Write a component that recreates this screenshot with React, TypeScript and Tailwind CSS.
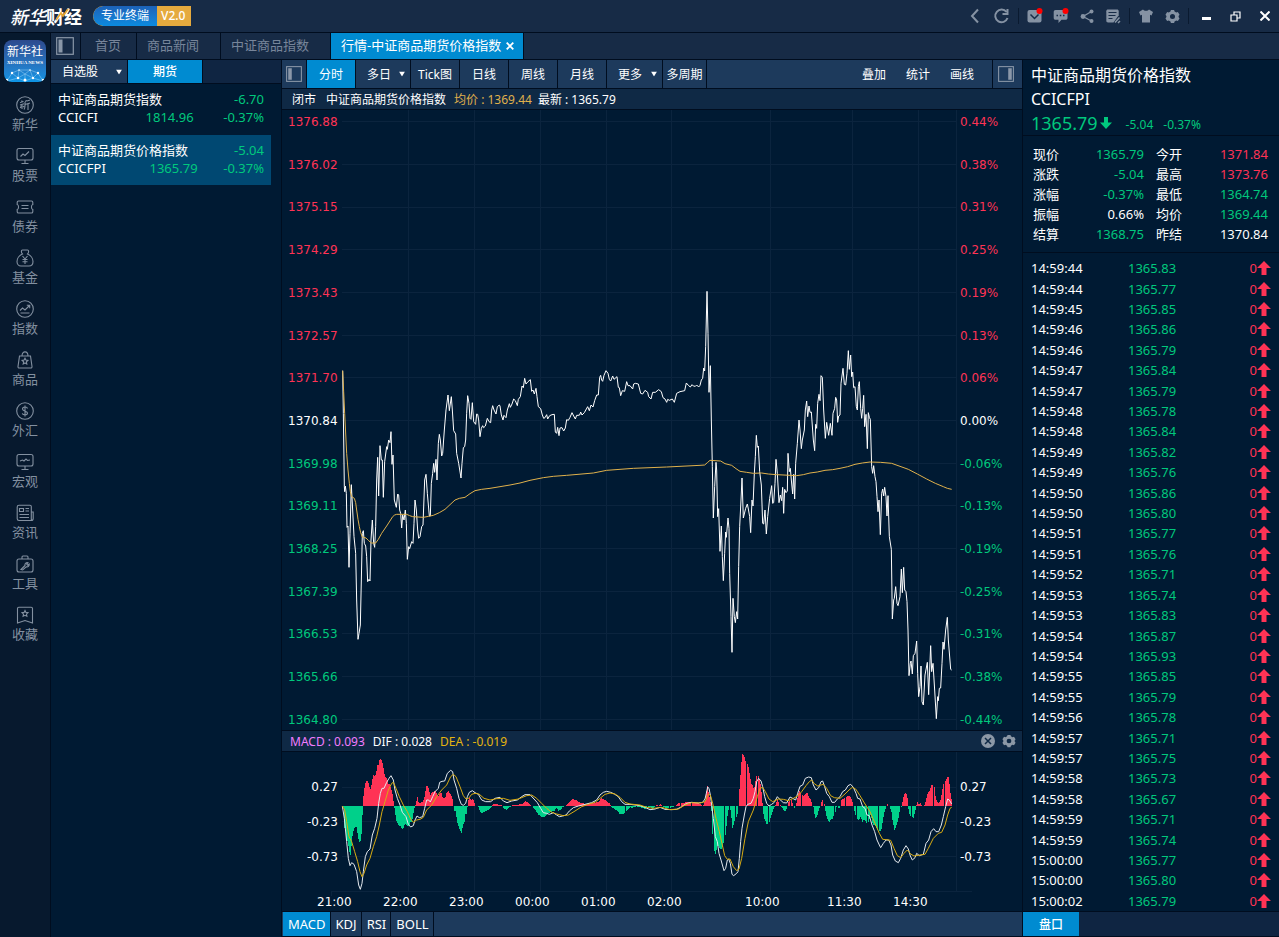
import { useState } from 'react'
import type { ReactNode } from 'react'

const navItems = ['新华', '股票', '债券', '基金', '指数', '商品', '外汇', '宏观', '资讯', '工具', '收藏']

const watchList = [
  { name: '中证商品期货指数', code: 'CCICFI', price: '1814.96', change: '-6.70', pct: '-0.37%' },
  { name: '中证商品期货价格指数', code: 'CCICFPI', price: '1365.79', change: '-5.04', pct: '-0.37%' },
]

const priceLabels = ['1376.88', '1376.02', '1375.15', '1374.29', '1373.43', '1372.57', '1371.70', '1370.84', '1369.98', '1369.11', '1368.25', '1367.39', '1366.53', '1365.66', '1364.80']
const pctLabels = ['0.44%', '0.38%', '0.31%', '0.25%', '0.19%', '0.13%', '0.06%', '0.00%', '-0.06%', '-0.13%', '-0.19%', '-0.25%', '-0.31%', '-0.38%', '-0.44%']
const macdLabels = ['0.27', '-0.23', '-0.73']
const timeLabels = ['21:00', '22:00', '23:00', '00:00', '01:00', '02:00', '10:00', '11:30', '14:30']

const quoteRows = [
  ['现价', '1365.79', 'down', '今开', '1371.84', 'up'],
  ['涨跌', '-5.04', 'down', '最高', '1373.76', 'up'],
  ['涨幅', '-0.37%', 'down', '最低', '1364.74', 'down'],
  ['振幅', '0.66%', 'flat', '均价', '1369.44', 'down'],
  ['结算', '1368.75', 'down', '昨结', '1370.84', 'flat'],
]

const trades = [
  ['14:59:44', '1365.83'], ['14:59:44', '1365.77'], ['14:59:45', '1365.85'], ['14:59:46', '1365.86'],
  ['14:59:46', '1365.79'], ['14:59:47', '1365.84'], ['14:59:47', '1365.79'], ['14:59:48', '1365.78'],
  ['14:59:48', '1365.84'], ['14:59:49', '1365.82'], ['14:59:49', '1365.76'], ['14:59:50', '1365.86'],
  ['14:59:50', '1365.80'], ['14:59:51', '1365.77'], ['14:59:51', '1365.76'], ['14:59:52', '1365.71'],
  ['14:59:53', '1365.74'], ['14:59:53', '1365.83'], ['14:59:54', '1365.87'], ['14:59:54', '1365.93'],
  ['14:59:55', '1365.85'], ['14:59:55', '1365.79'], ['14:59:56', '1365.78'], ['14:59:57', '1365.71'],
  ['14:59:57', '1365.75'], ['14:59:58', '1365.73'], ['14:59:58', '1365.67'], ['14:59:59', '1365.71'],
  ['14:59:59', '1365.74'], ['15:00:00', '1365.77'], ['15:00:00', '1365.80'], ['15:00:02', '1365.79'],
]

const tone: Record<string, string> = {
  up: 'text-[#ff3355]',
  down: 'text-[#00c87d]',
  flat: 'text-white',
}

// each session is plotted from its own x origin
const priceNight1 = '38,272 40,400 43,620 44,635 46,618 49,640 51,742 54,738 57,862 60,760 64,614 68,690 72,770 77,820 80,960 84,1078 87,1060 91,1035 94,900 97,760 100,752 103,790 107,798 110,830 113,905 117,898 120,903 123,780 127,720 131,790 134,802 137,740 140,600 143,532 146,648 150,497 154,540 157,540 160,652 164,545 170,500 172,508 176,480 180,488 183,455 186,553 189,525 193,660 199,682 203,642 206,645 209,690 212,700 215,744 218,705 222,720 226,690 229,730 232,838 236,800 239,806 245,785 249,790 252,730 255,660 259,690 263,750 266,775 270,770 275,740 279,735 284,600 288,583 292,640 298,708 301,708 304,610 308,580 311,550 314,577 318,538 321,600 325,490 328,463 331,480 335,528 338,520 343,450 348,390 354,345 358,392 364,350 367,390 371,452 377,462 380,520 386,550 393,594 396,550 400,503 404,500 407,480 410,400 413,347 417,370 420,415 423,418 427,368 431,425 437,433 440,402 443,403 446,420 450,470 454,445 458,437 461,443 466,438 472,415 477,425 482,428 485,390 488,377 492,390 498,402 502,380 508,375 510,378'
const priceNight2 = '0,378 4,405 9,420 12,406 15,410 18,413 22,390 28,371 31,382 36,372 41,357 46,362 52,377 55,358 61,350 66,318 70,323 74,295 78,312 84,305 91,299 95,334 99,330 103,342 108,325 111,350 115,380 122,386 127,405 131,415 135,413 140,404 143,417 149,407 156,404 163,403 166,456 170,460 173,442 177,467 180,444 186,443 191,453 196,444 200,419 205,421 210,412 216,398 221,408 226,417 230,406 234,406 239,405 242,396 246,405 253,398 263,380 268,392 273,375 279,381 284,362 290,345 295,345 299,292 302,286 305,300 308,304 312,286 318,272 324,280 328,298 332,303 338,288 342,298 351,290 355,322 358,323 362,347 367,332 374,334 380,305 384,317 390,317 398,327 401,312 406,310 415,312 422,340 428,342 435,331 443,337 446,350 453,357 458,337 466,337 476,329 484,335 489,353 495,357 500,367 503,358 508,361 517,357 523,367 530,340 540,335 554,332 559,309 566,317 571,321 576,314 580,318 586,319 590,315 596,321 600,316'
const priceDay = '0,316 4,300 8,295 11,264 14,273 17,200 21,34 24,160 27,337 31,257 34,420 37,560 40,714 44,620 48,547 50,570 53,710 56,686 60,814 64,738 67,830 70,902 74,820 77,756 79,772 84,714 87,745 89,880 93,1010 96,1117 99,955 103,1010 106,1028 110,995 113,1017 116,860 119,740 123,660 126,594 130,714 137,685 142,672 145,687 149,710 152,758 156,660 159,678 163,580 166,530 169,466 172,502 175,498 179,575 184,615 188,730 191,732 195,690 199,762 203,710 209,655 215,617 218,670 221,668 225,610 228,538 232,580 237,668 241,645 245,662 248,622 251,700 254,628 258,638 262,633 264,520 268,575 271,565 274,600 278,642 281,583 284,657 287,550 292,490 297,420 300,450 304,506 307,480 313,450 316,390 320,363 323,410 327,378 330,397 334,396 340,480 344,512 347,433 350,445 353,370 357,343 360,362 363,287 367,292 371,390 376,475 380,427 386,466 391,430 396,466 399,400 404,385 407,352 410,360 413,427 416,408 420,405 423,310 429,265 433,313 437,315 441,280 445,212 448,268 452,225 455,290 458,276 461,323 465,320 469,380 472,390 475,320 478,305 482,385 485,415 488,385 491,346 494,440 498,403 502,506 505,398 508,412 511,418 515,560 518,580 521,557 525,590 528,605 531,650 534,695 537,660 541,764 545,640 548,627 551,648 554,622 558,650 561,708 564,647 568,770 574,808 577,1017 581,960 583,955 587,920 591,970 594,977 600,950 604,867 607,938 611,862 614,930 618,935 621,965 624,1050 627,1187 631,1150 633,1143 637,1182 640,1127 645,1120 650,1083 653,1180 656,1250 660,1220 663,1158 666,1265 670,1275 675,1185 682,1147 686,1244 692,1097 695,1175 699,1150 704,1230 709,1316 713,1250 715,1262 718,1225 722,1224 726,1150 729,1086 732,1108 737,1050 742,1012 745,1080 752,1168 755,1170'
const avgNight = '38,272 41,335 44,400 50,520 54,570 58,610 61,635 65,650 73,655 77,668 80,690 84,718 88,740 92,758 97,771 108,774 116,782 124,789 137,789 145,778 155,760 172,735 188,710 194,705 200,703 230,703 239,707 248,710 280,712 296,709 310,706 328,698 345,688 360,674 375,660 388,655 405,652 420,641 435,632 455,628 480,625 540,615 570,609 600,601 640,593 670,589 710,586 790,579 830,571 910,565 1010,561 1110,556 1124,555'
const avgDay = '14,555 22,548 30,541 62,543 75,551 95,556 108,566 120,574 140,577 160,580 185,579 205,582 230,584 290,587 310,584 330,579 352,576 375,571 398,569 420,565 443,560 465,553 487,549 510,546 542,547 575,550 600,559 625,568 652,582 680,597 706,610 730,620 742,625 755,628'

const difNight = '187,243 193,280 200,350 205,400 210,422 215,413 222,418 230,440 236,480 241,493 246,475 250,440 256,395 262,380 270,372 277,330 284,310 291,280 296,235 301,205 306,190 312,190 320,172 327,160 333,152 340,165 345,195 352,220 360,240 367,262 378,275 385,298 392,306 400,302 405,285 411,273 418,278 428,275 434,250 440,225 446,225 451,231 458,215 465,200 475,190 479,172 486,169 494,168 502,145 512,136 518,140 522,165 530,190 537,220 544,238 550,241 557,235 562,215 568,202 577,197 585,203 595,208 605,225 617,230 632,230 645,220 660,217 670,228 681,233 695,228 712,225 725,215 735,209 750,209 762,222 772,233 782,250 790,263 800,265 808,268 820,263 830,270 838,275 848,273 858,270 868,258 880,248 895,243 915,238 935,233 950,225 960,210 970,202 980,199 992,202 1003,207 1015,215 1025,230 1035,238 1050,238'
const difDay = '30,238 45,240 60,242 75,247 90,254 105,252 120,247 135,253 155,254 170,253 185,245 200,235 215,232 235,234 248,232 255,222 259,205 263,186 267,190 271,210 275,240 280,280 286,335 292,350 297,385 303,405 312,437 317,430 322,405 326,402 331,415 336,448 341,452 350,445 354,440 358,400 362,350 366,310 373,270 378,245 383,238 393,235 400,220 405,200 410,170 416,160 423,168 428,185 434,215 440,235 447,243 455,238 463,232 472,215 478,222 490,233 500,234 510,216 518,220 527,225 533,205 540,184 548,180 556,160 566,156 574,158 580,180 588,195 596,188 603,170 608,168 614,185 620,205 628,215 636,232 644,232 652,222 660,215 668,200 676,195 684,182 692,178 700,187 708,205 713,220 720,222 728,245 735,250 741,270 748,272 756,300 764,320 771,345 778,360 782,368 790,355 798,345 806,345 813,360 818,390 826,408 835,413 842,400 850,375 858,362 865,372 871,393 877,405 885,398 890,385 898,392 910,388 918,355 926,345 933,320 941,311 948,320 956,320 964,300 970,275 977,245 983,222 988,225 995,237'
const deaNight = '187,243 194,255 200,290 207,335 215,350 224,380 233,410 240,440 246,455 252,445 260,420 270,400 280,365 290,335 298,300 306,260 315,230 325,195 335,175 340,172 348,190 358,215 370,240 382,260 392,282 400,292 410,285 420,283 430,277 440,255 455,240 470,215 485,195 500,180 512,155 520,148 528,155 540,185 550,212 558,222 566,220 575,208 585,205 597,207 612,220 630,225 650,221 670,220 690,226 715,222 740,212 755,210 770,220 785,235 800,250 815,262 830,267 850,272 865,270 885,258 905,245 925,238 945,232 960,220 975,208 990,204 1005,207 1020,217 1035,232 1050,237'
const deaDay = '30,237 60,240 80,247 100,250 125,247 150,254 175,252 195,240 215,233 240,234 255,230 265,208 271,210 278,235 288,280 298,320 307,360 314,392 322,403 330,402 340,425 350,437 357,432 365,400 375,340 385,290 400,255 412,215 420,190 428,187 436,200 447,222 458,230 475,222 490,223 505,227 520,220 533,213 545,200 558,182 568,170 575,165 583,176 593,183 610,178 620,190 632,212 643,218 660,220 675,207 687,195 697,187 707,192 720,212 735,237 750,260 765,295 778,325 788,343 800,344 812,346 822,370 832,392 842,398 852,385 862,375 872,387 882,393 900,390 915,388 925,370 940,340 955,325 965,322 975,300 983,270 990,250 995,247'

const histNight = '190,245 192,290 196,345 201,350 206,380 211,392 214,350 217,330 221,312 226,305 230,325 234,350 239,350 242,335 245,300 247,243 250,205 254,180 258,168 262,172 266,185 270,195 274,170 278,150 283,152 287,150 291,125 295,107 299,102 303,105 307,118 311,145 316,158 321,160 326,180 330,190 334,200 338,225 341,243 344,265 349,290 354,300 359,305 364,313 369,308 373,295 378,300 383,306 388,300 394,285 398,262 402,246 404,243 407,230 411,217 415,232 420,235 425,230 430,222 434,200 438,182 442,185 446,195 450,210 454,205 459,198 463,196 467,205 472,215 476,210 482,200 487,215 492,220 497,205 502,197 507,205 512,210 517,222 520,243 524,260 529,290 535,310 539,318 544,325 548,300 553,290 557,262 560,243 562,225 567,218 573,225 578,220 583,235 586,243 592,243 597,258 601,264 610,262 618,258 625,252 632,245 637,238 650,238 660,239 665,243 670,252 678,254 685,250 690,243 697,239 712,239 720,238 728,234 734,229 740,232 745,234 750,240 755,243 760,252 768,260 773,268 780,273 788,276 796,272 802,266 810,262 820,257 828,247 833,257 840,254 848,246 855,243 860,236 868,230 877,223 885,224 893,230 905,235 918,236 930,234 942,234 953,230 962,220 972,224 980,228 986,235 990,243 996,249 1006,254 1015,262 1020,268'
const histDay = '0,268 6,268 12,265 20,255 28,247 36,249 44,245 55,245 68,250 76,252 88,246 96,252 105,243 112,239 120,238 126,243 135,248 150,248 160,245 168,240 176,234 190,233 205,230 220,232 240,236 247,243 250,232 254,228 257,200 260,181 264,200 268,220 272,235 274,260 277,325 280,375 284,387 288,370 292,360 297,370 302,375 307,365 311,350 315,320 319,280 323,255 327,243 330,255 333,275 337,312 341,295 345,280 350,265 353,245 355,207 359,160 362,122 365,88 369,88 374,100 379,115 383,127 387,150 392,175 397,180 401,195 404,178 408,155 413,152 417,165 421,190 425,225 428,260 431,280 436,290 441,300 446,290 450,275 456,258 462,247 466,238 472,225 476,232 480,243 485,250 491,260 497,255 501,246 505,232 511,225 517,240 522,250 527,238 532,215 537,195 543,208 549,214 555,205 560,202 566,218 572,222 577,243 580,265 584,280 590,272 596,250 602,240 606,222 610,235 614,260 619,280 626,292 632,283 638,282 643,262 648,240 655,250 660,243 664,220 670,222 677,215 682,212 688,215 695,225 700,243 704,262 709,283 714,287 720,275 726,290 732,283 740,295 744,290 749,270 752,278 757,300 763,300 769,310 775,318 781,318 786,290 791,265 796,250 802,236 806,243 812,262 816,290 822,315 828,300 834,285 838,262 842,243 846,225 850,207 855,205 860,207 863,235 866,265 871,273 877,280 883,262 887,243 890,227 895,240 901,233 905,243 910,243 915,228 919,212 924,200 929,198 932,180 936,180 940,182 943,210 948,230 954,235 959,230 964,207 968,185 973,168 978,160 982,150 986,170 990,205 994,225 995,243'

const ZERO = 243

// one bar per minute, heights read off the outline
function histogram(outline: string) {
  const pts = outline.split(' ').map((p) => p.split(',').map(Number))
  const bars: { x: number; v: number }[] = []
  let i = 0
  for (let x = pts[0][0]; x < pts[pts.length - 1][0]; x += 3.3) {
    while (pts[i + 1][0] < x) i++
    const [x0, y0] = pts[i]
    const [x1, y1] = pts[i + 1]
    bars.push({ x, v: y0 + ((y1 - y0) * (x - x0)) / (x1 - x0) })
  }
  return bars
}

function Bars({ outline }: { outline: string }) {
  return (
    <g shapeRendering="crispEdges">
      {histogram(outline).map((b) => (
        <rect key={b.x} x={b.x} y={Math.min(b.v, ZERO)} width={3.2} height={Math.abs(b.v - ZERO)} fill={b.v < ZERO ? '#ff3355' : '#00d08a'} />
      ))}
    </g>
  )
}

function Line({ points, color }: { points: string; color: string }) {
  return <polyline points={points} fill="none" stroke={color} strokeWidth={1} strokeLinejoin="round" vectorEffect="non-scaling-stroke" />
}

function GridLine({ d }: { d: string }) {
  return <path d={d} stroke="#0b243e" fill="none" vectorEffect="non-scaling-stroke" shapeRendering="crispEdges" />
}

const priceCols = [235, 433, 630, 828, 1025, 1321, 1567, 1765, 1880]

function PriceChart() {
  return (
    <svg viewBox="36 -510 1845 1860" preserveAspectRatio="none" className="block h-full w-full" role="img" aria-label="分时走势">
      {priceLabels.map((l, i) => <GridLine key={l} d={`M36 ${-475 + i * 128}H1881`} />)}
      {priceCols.map((x) => <GridLine key={x} d={`M${x} -510V1350`} />)}
      <Line points={priceNight1} color="#ffffff" />
      <g transform="translate(510 0)"><Line points={priceNight2} color="#ffffff" /></g>
      <g transform="translate(1110 0)"><Line points={priceDay} color="#ffffff" /></g>
      <Line points={avgNight} color="#e0b14c" />
      <g transform="translate(1110 0)"><Line points={avgDay} color="#e0b14c" /></g>
    </svg>
  )
}

function MacdChart() {
  return (
    <svg viewBox="186 81 1845 420" preserveAspectRatio="none" className="block h-full w-full overflow-visible" role="img" aria-label="MACD">
      {[186, 290, 394].map((y) => <GridLine key={y} d={`M186 ${y}H2031`} />)}
      {priceCols.map((x) => <GridLine key={x} d={`M${x + 150} 81V499`} />)}
      <GridLine d="M155 499H2077" />
      {[155, 355, 553, 751, 949, 1147, 1441, 1687, 1885].map((x) => <GridLine key={x} d={`M${x} 499V512`} />)}
      <Bars outline={histNight} />
      <g transform="translate(1020 0)"><Bars outline={histDay} /></g>
      <Line points={difNight} color="#e4e9ee" />
      <g transform="translate(1020 0)"><Line points={difDay} color="#e4e9ee" /></g>
      <Line points={deaNight} color="#d8ab12" />
      <g transform="translate(1020 0)"><Line points={deaDay} color="#d8ab12" /></g>
    </svg>
  )
}

const star = 'M9 7.2l.9 1.9 2 .3-1.5 1.4.4 2.1L9 11.9l-1.8 1 .4-2.1-1.5-1.4 2-.3z'

const navIcons: Record<string, ReactNode> = {
  新华: <><circle cx="9" cy="9" r="8.3" /><path d="M4 6.5l3.5-1M5.8 4.5v2M4 9l4-1.2M6 8v5M4.2 12l1-1.6M7 10l1 1.2M9 5.5l2-1M9 6v3.5c0 2-.4 3-1 4M9 8.5l5-1.5M12 7.5V14M11 5l3-1" /></>,
  股票: <><rect x="1" y="1.5" width="16" height="11.5" rx="2" /><path d="M9 13v3M5.5 16.5h7M4.500 9.500L7 7l2 1.500L13 4.500" /></>,
  债券: <path d="M2.500 3h13c.8 0 1.300.5 1.300 1.300v2.200c-1.800.3-1.800 4.700 0 5v2.200c0 .8-.5 1.300-1.300 1.300h-13c-.8 0-1.300-.5-1.300-1.300v-2.200c1.800-.3 1.800-4.700 0-5V4.300C1.200 3.500 1.700 3 2.500 3zM5.500 7.500h7M5.500 10.500h7" />,
  基金: <><path d="M6.500 5C5 3.500 5 1 6.500 1h5c1.500 0 1.500 2.500 0 4 3.500 1.500 5.500 5 5.500 7.500S15.500 17 13 17H5c-2.500 0-4-2-4-4.500S3 6.500 6.500 5z" /><path d="M6.500 7L9 10l2.500-3M9 10v5M6.500 10.500h5M6.500 12.700h5" /></>,
  指数: <><circle cx="9" cy="9" r="8.3" /><path d="M4 10.500l2.500-2.500 2.500 2 4.500-4.500M10.800 5.300h2.900v2.900M4.500 13h9" /></>,
  商品: <><path d="M3.500 5h11l1.500 10.500c.1.900-.4 1.500-1.300 1.500H3.300c-.9 0-1.400-.6-1.300-1.500zM6 5c0-5.500 6-5.500 6 0" /><path d={star} /></>,
  外汇: <><circle cx="9" cy="9" r="8.3" /><path d="M11.500 6.500C11 4.500 6.500 4.500 6.500 7S11.500 8.800 11.500 11 7 13.500 6.300 11.300M9 3.500v11" /></>,
  宏观: <><rect x="1" y="1.5" width="16" height="11.5" rx="2" /><path d="M9 13v3M5.500 16.500h7M4 8l2.500-1L8 8l2-2 1.500 1.500L14 7" /></>,
  资讯: <><path d="M3 1.200h11c.8 0 1.300.5 1.300 1.300v14H3c-1 0-1.800-.7-1.800-1.700V3c0-1 .8-1.800 1.800-1.800zM15.300 8h1.900v6.500c0 1.200-.7 2-1.900 2" /><path d="M3.500 4.500h4v3h-4zM9.500 4.500h3.500M9.500 7h3.500M3.500 10.500H13M3.500 13.500H13" /></>,
  工具: <><rect x="1" y="4" width="16" height="13" rx="2" /><path d="M6 4V2c0-.6.4-1 1-1h4c.6 0 1 .4 1 1v2" /><path d="M5 14.500l4-4c-.5-2 1.500-3.500 3-2.800L10.700 9l1 1.200 1.500-1.200c.3 2-1.200 3.300-3 2.800l-3.500 3.200z" /></>,
  收藏: <><path d="M1.500 17V2.500c0-.8.5-1.300 1.300-1.300h12.400c.8 0 1.300.5 1.300 1.300V17L9 14.500z" /><path d="M9 4.500l.9 1.900 2.100.3-1.500 1.500.4 2.100L9 9.300l-1.900 1 .4-2.100L6 6.700l2.100-.3z" /></>,
}

function GearIcon({ size }: { size: number }) {
  return (
    <svg width={size} height={size} viewBox="0 0 16 16" fill="currentColor" aria-hidden="true">
      <path fillRule="evenodd" d="M6.300 1h3.400l.5 1.700 1.800 1 1.700-.5L15.500 6l-1 1.500v1l1 1.500-1.800 2.800-1.700-.5-1.800 1L9.700 15H6.300l-.5-1.700-1.800-1-1.700.5L.5 10l1-1.500v-1L.5 6l1.800-2.800 1.700.5 1.800-1zM8 5.300a2.700 2.700 0 1 0 0 5.400 2.700 2.700 0 0 0 0-5.400z" />
    </svg>
  )
}

function PanelIcon({ side, size }: { side: 'left' | 'right'; size: number }) {
  return (
    <svg width={size} height={size} viewBox="0 0 18 18" aria-hidden="true">
      <rect x="0.7" y="0.7" width="16.6" height="16.6" fill="none" stroke="#8a97a8" strokeWidth="1.2" />
      <rect x={side === 'left' ? 2.5 : 11.5} y="2.5" width="4" height="13" fill="#8a97a8" />
    </svg>
  )
}

function IconButton({ label, dot, children }: { label: string; dot?: boolean; children: ReactNode }) {
  return (
    <button type="button" aria-label={label} className="flex h-8 w-[26px] items-center justify-center text-[#8592a3]">
      <svg width="16" height="16" viewBox="0 0 16 16" fill="none" stroke="currentColor" aria-hidden="true" className="overflow-visible">
        {children}
        {dot && <circle cx="12.5" cy="3" r="3" fill="#ff0000" stroke="none" />}
      </svg>
    </button>
  )
}

function Divider() {
  return <span className="mx-[3px] h-4 w-px bg-[#0a1a30]" />
}

function TitleBar() {
  return (
    <header className="flex h-[33px] shrink-0 items-center border-b border-[#000d1f] bg-[#172b46]">
      <h1 className="relative flex items-center pl-2.5 text-lg leading-8 text-white">
        <span className="font-['Noto_Sans_CJK_SC',sans-serif] font-medium italic">新华</span>
        <span className="font-['Noto_Sans_CJK_SC',sans-serif] font-bold">财经</span>
        <svg className="absolute top-2 right-3" width="14" height="14" viewBox="0 0 14 14" fill="none" stroke="#e8a62d" strokeWidth="1.6" aria-hidden="true">
          <path d="M0 12L5 5l2 3 5-7" />
        </svg>
      </h1>
      <div className="ml-[11px] flex h-5 overflow-hidden rounded-l-full rounded-tr-sm rounded-br-xl bg-[#e5aa3e] text-xs leading-5 text-white">
        <span className="rounded-l-full rounded-br-xl bg-linear-to-b from-[#1c62b8] to-[#0a8be0] px-2">专业终端</span>
        <span className="w-[34px] pl-1 font-medium">V2.0</span>
      </div>
      <div className="ml-auto flex items-center">
        <IconButton label="后退"><path d="M10 1.500L4 8l6 6.500" strokeWidth="2" /></IconButton>
        <IconButton label="刷新"><path d="M12.500 4A6.300 6.300 0 1 0 13.500 10M13.500 1v5H8.500" strokeWidth="2" /></IconButton>
        <Divider />
        <IconButton label="邮件" dot><rect x="0.5" y="2" width="14" height="12.500" rx="2" fill="currentColor" stroke="none" /><path d="M3.500 6.500l4 4 4-4" stroke="#172b46" strokeWidth="1.500" /></IconButton>
        <IconButton label="消息" dot><path d="M2.500 2h10c1 0 2 .8 2 2v6c0 1-.8 1.800-2 1.800H8.500L5.500 15v-3.200h-3c-1 0-1.800-.8-1.800-1.800V4C.7 2.800 1.500 2 2.500 2z" fill="currentColor" stroke="none" /><path d="M3.500 7.500h1.500M6.800 7.500h1.500M10 7.500h1.500" stroke="#172b46" strokeWidth="1.500" /></IconButton>
        <IconButton label="分享"><path d="M12.500 3.500L4 8.500l8.500 4.500" strokeWidth="1.300" /><g fill="currentColor" stroke="none"><circle cx="12.500" cy="3.500" r="2" /><circle cx="4" cy="8.500" r="2.400" /><circle cx="12.500" cy="13" r="2" /></g></IconButton>
        <IconButton label="笔记"><path d="M3 1.500h9c1 0 1.700.7 1.700 1.700v4L8.500 14.500H3c-1 0-1.700-.7-1.700-1.700V3.200C1.300 2.200 2 1.500 3 1.500z" fill="currentColor" stroke="none" /><path d="M3.500 4.500h8M3.500 7.500h7M3.500 10.500h4" stroke="#172b46" strokeWidth="1.200" /><path d="M10 14.500l4.500-5M13 15l2-2" strokeWidth="1.500" /></IconButton>
        <Divider />
        <IconButton label="皮肤"><path d="M5 1.500c1 1.800 5 1.800 6 0l4 2.500-1.500 3.500-1.500-.7v7.700H4V6.800l-1.500.7L1 4z" fill="currentColor" stroke="none" /></IconButton>
        <button type="button" aria-label="设置" className="flex h-8 w-[26px] items-center justify-center text-[#8592a3]"><GearIcon size={15} /></button>
        <Divider />
        <div className="flex text-white">
          <button type="button" aria-label="最小化" className="flex h-8 w-[29px] items-center justify-center"><span className="mt-1 h-[3px] w-[9px] bg-white" /></button>
          <button type="button" aria-label="还原" className="flex h-8 w-[29px] items-center justify-center">
            <svg width="11" height="11" viewBox="0 0 11 11" fill="none" stroke="currentColor" strokeWidth="1.200"><path d="M1 4h6v6H1zM4 4V1h6v6H7" /></svg>
          </button>
          <button type="button" aria-label="关闭" className="flex h-8 w-[29px] items-center justify-center">
            <svg width="10" height="10" viewBox="0 0 10 10" stroke="currentColor" strokeWidth="2"><path d="M.5.5l9 9M9.500.5l-9 9" /></svg>
          </button>
        </div>
      </div>
    </header>
  )
}

function Sidebar() {
  return (
    <nav className="flex w-[51px] shrink-0 flex-col border-r border-[#000d1f] bg-[#07192e] pt-[7px]">
      <a href="#xinhua" className="mx-auto flex h-[42px] w-[42px] flex-col items-center overflow-hidden rounded-lg bg-linear-to-b from-[#2c4a8e] to-[#0c95e6] text-white">
        <span className="pt-1 text-xs leading-4">新华社</span>
        <span className="h-1.5 font-['Liberation_Serif',serif] text-[5px] leading-[5px] font-bold">XINHUA NEWS</span>
        <svg width="42" height="16" viewBox="0 0 42 16" fill="none" stroke="#9fd4f5" strokeWidth="0.5" aria-hidden="true">
          <path d="M3 15L8 7l7-3h11l8 3 5 8M8 7l6 5-11 3M15 4l-1 8 7 3 8-3-3-8M15 4l6 4 5-4M14 12l7-4 8 4M21 8v7M34 7l-5 5 10 3" />
          <g fill="#fff" stroke="none"><circle cx="8" cy="7" r="1.200" /><circle cx="15" cy="4" r="0.800" /><circle cx="26" cy="4" r="0.800" /><circle cx="34" cy="7" r="1.200" /><circle cx="14" cy="12" r="1.200" /><circle cx="29" cy="12" r="1.200" /><circle cx="21" cy="14" r="1.500" /><circle cx="3" cy="14" r="1.200" /><circle cx="39" cy="14" r="1.200" /></g>
        </svg>
      </a>
      <ul className="pt-[14px]">
        {navItems.map((item) => (
          <li key={item}>
            <a href={'#' + item} className="flex h-[51px] flex-col items-center gap-px text-[13px] leading-[18px] text-[#8390a0]">
              <svg width="18" height="18" viewBox="0 0 18 18" fill="none" stroke="currentColor" strokeWidth="1.100" aria-hidden="true">{navIcons[item]}</svg>
              {item}
            </a>
          </li>
        ))}
      </ul>
    </nav>
  )
}

function TabStrip() {
  return (
    <div className="flex h-[27px] shrink-0 border-b border-[#000d1f] bg-[#172b46] text-[13px] text-[#77859a]">
      <button type="button" aria-label="侧栏" className="flex w-[30px] items-center border-r border-[#000d1f] pl-[5px]"><PanelIcon side="left" size={18} /></button>
      <button type="button" className="border-r border-[#000d1f] pr-[15px] pl-[14px]">首页</button>
      <button type="button" className="border-r border-[#000d1f] pr-[21px] pl-2.5">商品新闻</button>
      <button type="button" className="border-r border-[#000d1f] pr-[21px] pl-2.5">中证商品指数</button>
      <button type="button" className="flex items-center gap-[5px] border-r border-[#000d1f] bg-[#008bd1] pr-[9px] pl-2.5 text-white">
        行情-中证商品期货价格指数
        <svg width="8" height="8" viewBox="0 0 8 8" stroke="currentColor" strokeWidth="1.800" aria-hidden="true"><path d="M.7.7l6.600 6.600M7.300.7L.7 7.300" /></svg>
      </button>
    </div>
  )
}

function Dropdown({ label, options, className }: { label: string; options: string[]; className: string }) {
  return (
    <div className={'relative shrink-0 border-r border-[#000d1f] bg-[#1d3a5c] text-white ' + className}>
      <select aria-label={label} className="h-full w-full appearance-none bg-transparent pl-[11px] text-xs outline-none">
        {options.map((o) => <option key={o}>{o}</option>)}
      </select>
      <svg className="pointer-events-none absolute top-1/2 right-[5px] -translate-y-1/2" width="6" height="5" viewBox="0 0 6 5" fill="currentColor" aria-hidden="true"><path d="M0 0h6L3 5z" /></svg>
    </div>
  )
}

function WatchPanel() {
  return (
    <aside className="w-[231px] shrink-0 border-r border-[#000d1f]">
      <div className="flex h-6 border-b border-[#000d1f] bg-[#0f2542] text-xs text-white">
        <Dropdown label="分组" options={['自选股']} className="w-[77px]" />
        <button type="button" className="w-[75px] border-r border-[#000d1f] bg-[#008bd1] pt-px font-medium">期货</button>
      </div>
      <ul>
        {watchList.map((w, i) => (
          <li key={w.code} className={'mr-2.5 mb-px px-[7px] pt-1.5 pb-2 text-[13px] leading-[18px] text-white ' + (i === 1 ? 'bg-[#004872]' : '')}>
            <div className="flex justify-between"><span>{w.name}</span><span className="text-[#00c87d]">{w.change}</span></div>
            <div className="flex justify-between">
              <span>{w.code}</span>
              <span className="pl-[18px] text-[#00c87d]">{w.price}</span>
              <span className="text-[#00c87d]">{w.pct}</span>
            </div>
          </li>
        ))}
      </ul>
    </aside>
  )
}

function Toolbar() {
  const [period, setPeriod] = useState('分时')
  const tab = (name: string, width: string) => (
    <button type="button" onClick={() => setPeriod(name)} className={'shrink-0 border-r border-[#000d1f] pt-0.5 ' + width + (period === name ? ' bg-[#008bd1]' : '')}>{name}</button>
  )
  return (
    <div className="flex h-[29px] shrink-0 border-b border-[#000d1f] bg-[#1d3a5c] text-xs text-white">
      <button type="button" aria-label="左栏" className="flex w-[25px] shrink-0 items-center justify-center border-r border-[#000d1f]"><PanelIcon side="left" size={16} /></button>
      {tab('分时', 'w-[49px]')}
      <Dropdown label="多日" options={['多日', '3日', '5日']} className="w-[55px] pt-0.5" />
      {tab('Tick图', 'w-[49px]')}
      {tab('日线', 'w-[49px]')}
      {tab('周线', 'w-[49px]')}
      {tab('月线', 'w-[49px]')}
      <Dropdown label="更多" options={['更多', '季线', '年线']} className="w-[56px] pt-0.5" />
      {tab('多周期', 'w-[44px]')}
      <div className="ml-auto flex shrink-0 gap-5 border-r border-[#000d1f] pt-0.5 pr-[18px]">
        <button type="button">叠加</button>
        <button type="button">统计</button>
        <button type="button">画线</button>
      </div>
      <button type="button" aria-label="右栏" className="flex w-[29px] shrink-0 items-center pl-[5px]"><PanelIcon side="right" size={16} /></button>
    </div>
  )
}

function labelTone(i: number) {
  return i < 7 ? 'text-[#ff3355]' : i === 7 ? 'text-white' : 'text-[#00c87d]'
}

function ChartPanel() {
  const [indicator, setIndicator] = useState('MACD')
  return (
    <main className="flex min-w-0 flex-1 flex-col">
      <Toolbar />
      <div className="flex h-[21px] shrink-0 items-center border-b border-[#000d1f] bg-[#0f2945] pt-0.5 pl-2.5 text-xs whitespace-pre text-white">
        <span className="mr-2.5">闭市</span>
        <span className="mr-2">中证商品期货价格指数</span>
        <span className="mr-1.5 text-[#e0b14c]">均价 : 1369.44</span>
        <span>最新 : 1365.79</span>
      </div>
      <div className="flex min-h-0 flex-1 font-['DejaVu_Sans',sans-serif] text-xs leading-5">
        <div className="flex w-[60px] shrink-0 flex-col justify-between pt-0.5 pl-1.5">
          {priceLabels.map((l, i) => <span key={l} className={labelTone(i)}>{l}</span>)}
        </div>
        <div className="min-w-0 flex-1"><PriceChart /></div>
        <div className="flex w-[65px] shrink-0 flex-col justify-between pt-0.5 pl-[3px]">
          {pctLabels.map((l, i) => <span key={l} className={labelTone(i)}>{l}</span>)}
        </div>
      </div>
      <div className="flex h-[22px] shrink-0 items-center gap-2 border-y border-[#000d1f] bg-[#0f2945] pr-1.5 pl-2 text-xs text-white">
        <span className="pt-0.5 text-[#f27cff]">MACD : 0.093</span>
        <span className="pt-0.5">DIF : 0.028</span>
        <span className="pt-0.5 text-[#e5b410]">DEA : -0.019</span>
        <div className="ml-auto flex gap-[7px] text-[#8c98a6]">
          <button type="button" aria-label="关闭指标">
            <svg width="14" height="14" viewBox="0 0 14 14"><circle cx="7" cy="7" r="7" fill="currentColor" /><path d="M4 4l6 6M10 4l-6 6" stroke="#0f2945" strokeWidth="1.500" /></svg>
          </button>
          <button type="button" aria-label="指标设置"><GearIcon size={14} /></button>
        </div>
      </div>
      <div className="flex h-35 shrink-0 font-['DejaVu_Sans',sans-serif] text-xs text-white">
        <div className="flex w-[60px] shrink-0 flex-col py-[17px] pr-1 text-right">
          {macdLabels.map((l) => <span key={l} className="flex flex-1 items-center justify-end">{l}</span>)}
        </div>
        <div className="min-w-0 flex-1"><MacdChart /></div>
        <div className="flex w-[65px] shrink-0 flex-col py-[17px] pl-[3px]">
          {macdLabels.map((l) => <span key={l} className="flex flex-1 items-center">{l}</span>)}
        </div>
      </div>
      <div className="grid h-5 shrink-0 grid-cols-[66fr_66fr_66fr_66fr_66fr_98fr_82fr_66fr_129fr] border-b border-[#000d1f] pl-[35px] font-['DejaVu_Sans',sans-serif] text-xs leading-5 text-white">
        {timeLabels.map((t) => <span key={t}>{t}</span>)}
      </div>
      <div className="flex h-[25px] shrink-0 border-b border-[#000d1f] bg-[#1d3a5c] pl-px text-[13px] text-white">
        {['MACD', 'KDJ', 'RSI', 'BOLL'].map((name) => (
          <button key={name} type="button" onClick={() => setIndicator(name)} className={'border-r border-[#000d1f] pt-0.5 pr-1 pl-[5px] ' + (indicator === name ? 'bg-[#008bd1]' : '')}>{name}</button>
        ))}
      </div>
    </main>
  )
}

function QuotePanel() {
  return (
    <aside className="flex w-[257px] shrink-0 flex-col border-l border-[#000d1f] text-white">
      <div className="h-[76px] shrink-0 border-b border-[#000d1f] px-2 pt-[3px]">
        <h2 className="text-base leading-6">中证商品期货价格指数</h2>
        <p className="text-base leading-6">CCICFPI</p>
        <p className="flex items-center text-lg leading-6 text-[#00c87d]">
          1365.79
          <svg className="ml-0.5" width="12" height="12" viewBox="0 0 12 12" fill="currentColor" aria-hidden="true"><path d="M4 0h4v5.500h4L6 12 0 5.500h4z" /></svg>
          <span className="ml-3.5 pt-1 text-xs">-5.04</span>
          <span className="ml-2.5 pt-1 text-xs">-0.37%</span>
        </p>
      </div>
      <div className="h-[117px] shrink-0 border-b border-[#000d1f] pt-2 pr-[11px] pl-2.5">
        <table className="w-full table-fixed text-[13px] leading-5">
          <tbody>
            {quoteRows.map((r) => (
              <tr key={r[0]}>
                <th className="w-[27px] p-0 text-left font-normal">{r[0]}</th>
                <td className={'w-[96px] p-0 pr-3 text-right ' + tone[r[2]]}>{r[1]}</td>
                <th className="w-[27px] p-0 text-left font-normal">{r[3]}</th>
                <td className={'p-0 text-right ' + tone[r[5]]}>{r[4]}</td>
              </tr>
            ))}
          </tbody>
        </table>
      </div>
      <div className="min-h-0 flex-1 overflow-hidden border-b border-[#000d1f] pt-[5px] pr-2 pl-2">
        <table className="h-full w-full text-[13px] leading-5">
          <tbody>
            {trades.map(([time, price], i) => (
              <tr key={i}>
                <td className="w-[97px] p-0">{time}</td>
                <td className="p-0 text-[#00c87d]">{price}</td>
                <td className="p-0 text-[#ff3355]">
                  <span className="flex items-center justify-end">
                    0
                    <svg width="14" height="14" viewBox="0 0 14 14" fill="currentColor" aria-hidden="true"><path d="M7 0l7 7H9.500v7h-5V7H0z" /></svg>
                  </span>
                </td>
              </tr>
            ))}
          </tbody>
        </table>
      </div>
      <div className="flex h-[25px] shrink-0 border-b border-[#000d1f] bg-[#0f2542] text-xs">
        <button type="button" className="w-14 bg-[#008bd1] pt-0.5 font-medium">盘口</button>
      </div>
    </aside>
  )
}

export default function App() {
  return (
    <div className="flex h-screen min-h-[860px] flex-col bg-[#001a33] font-['Noto_Sans','Noto_Sans_CJK_SC',sans-serif]">
      <TitleBar />
      <div className="flex min-h-0 flex-1">
        <Sidebar />
        <div className="flex min-w-0 flex-1 flex-col">
          <TabStrip />
          <div className="flex min-h-0 flex-1">
            <WatchPanel />
            <ChartPanel />
            <QuotePanel />
          </div>
        </div>
      </div>
    </div>
  )
}
